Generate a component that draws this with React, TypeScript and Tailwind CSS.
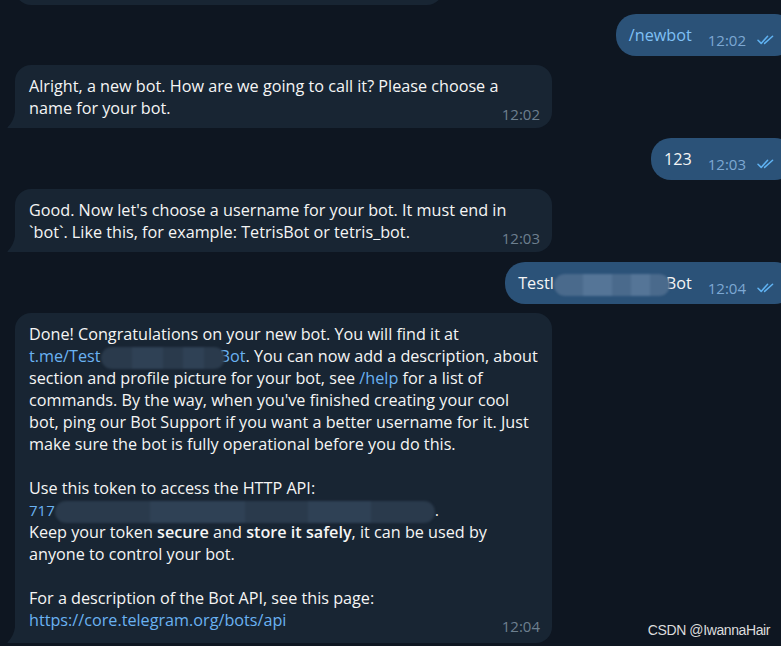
import * as React from "react"

const Checks = () => (
  <svg width="17" height="10" viewBox="0 0 17 10" fill="none" className="text-[#5fb2f2]">
    <path d="M1 5.2 L4.2 8.4 L10.6 1.2" stroke="currentColor" strokeWidth="1.5" strokeLinecap="round" strokeLinejoin="round" />
    <path d="M7.6 8.4 L15.6 1.2" stroke="currentColor" strokeWidth="1.5" strokeLinecap="round" />
  </svg>
)

const Tail = () => (
  <svg width="10" height="16" viewBox="0 0 10 16" className="absolute bottom-0 left-[-8px]">
    <path d="M10 0 L10 16 L1 16 Q0 16 0.6 15.2 Q7 9 8 0 Z" fill="#182533" />
  </svg>
)

function Blur({ w, tone = "dark" }: { w: number; tone?: "dark" | "light" }) {
  const base = tone === "dark" ? "bg-[#2a3a4c]" : "bg-[#4a6a8c]"
  const alt = tone === "dark" ? "bg-[#2f4155]" : "bg-[#557597]"
  return (
    <span className="relative inline-block h-[1em] align-middle" style={{ width: w }}>
      <span className={`absolute inset-x-0 -top-[3px] -bottom-[3px] flex overflow-hidden rounded-full blur-[1px] ${base}`}>
        <span className="w-1/4" />
        <span className={`w-1/4 ${alt}`} />
        <span className="w-1/6" />
        <span className={`w-1/6 ${alt}`} />
      </span>
    </span>
  )
}

function Incoming({ children, time, big }: { children: React.ReactNode; time: string; big?: boolean }) {
  return (
    <div
      className={`relative ml-[15px] w-[537px] rounded-[16px] rounded-bl-none bg-[#182533] px-[14px] pt-[10px] text-[16.2px] leading-[22px] text-[#f5f5f5] ${
        big ? "pb-[12px]" : "pb-[9px]"
      }`}
    >
      {children}
      <span
        className={`absolute right-[12px] text-[15px] leading-[18px] text-[#6d7f8f] ${
          big ? "bottom-[8px]" : "bottom-[5px]"
        }`}
      >
        {time}
      </span>
      <Tail />
    </div>
  )
}

function Outgoing({ children, time }: { children: React.ReactNode; time: string }) {
  return (
    <div className="flex justify-end -mr-[14px]">
      <div className="flex h-[42px] items-center rounded-[20px] bg-[#2b5278] pl-[13px] pr-[21px] text-[16.2px] leading-[22px] text-[#f5f5f5]">
        {children}
        <span className="ml-[16px] mt-[10px] text-[15px] leading-[18px] text-[#7da8d3]">{time}</span>
        <span className="ml-[11px] mt-[9px]">
          <Checks />
        </span>
      </div>
    </div>
  )
}

export default function App() {
  return (
    <div
      className="relative flex h-[646px] w-[781px] flex-col overflow-hidden bg-[#0e1621]"
      style={{ fontFamily: '"Open Sans", "Noto Sans", sans-serif' }}
    >
      <div className="-mt-[40px] ml-[15px] h-[45px] w-[428px] rounded-[16px] bg-[#182533]" />

      <div className="mt-[9px]">
        <Outgoing time="12:02">
          <span className="text-[#7fc0f5]">/newbot</span>
        </Outgoing>
      </div>

      <div className="mt-[9px]">
        <Incoming time="12:02">
          <div className="whitespace-nowrap">Alright, a new bot. How are we going to call it? Please choose a</div>
          <div className="whitespace-nowrap">name for your bot.</div>
        </Incoming>
      </div>

      <div className="mt-[10px]">
        <Outgoing time="12:03">
          <span>123</span>
        </Outgoing>
      </div>

      <div className="mt-[9px]">
        <Incoming time="12:03">
          <div className="whitespace-nowrap">Good. Now let's choose a username for your bot. It must end in</div>
          <div className="whitespace-nowrap">`bot`. Like this, for example: TetrisBot or tetris_bot.</div>
        </Incoming>
      </div>

      <div className="mt-[10px]">
        <Outgoing time="12:04">
          <span className="whitespace-nowrap">
            Testl<Blur w={116} tone="light" />
            <span className="-ml-[4px]">Bot</span>
          </span>
        </Outgoing>
      </div>

      <div className="mt-[9px]">
        <Incoming time="12:04" big>
          <div className="whitespace-nowrap">Done! Congratulations on your new bot. You will find it at</div>
          <div className="whitespace-nowrap">
            <span className="text-[#6ab2f2]">
              t.me/Test<Blur w={124} />
              <span className="-ml-[5px]">Bot</span>
            </span>
            . You can now add a description, about
          </div>
          <div className="whitespace-nowrap">
            section and profile picture for your bot, see <span className="text-[#6ab2f2]">/help</span> for a list of
          </div>
          <div className="whitespace-nowrap">commands. By the way, when you've finished creating your cool</div>
          <div className="whitespace-nowrap">bot, ping our Bot Support if you want a better username for it. Just</div>
          <div className="whitespace-nowrap">make sure the bot is fully operational before you do this.</div>
          <div className="h-[22px]" />
          <div className="whitespace-nowrap">Use this token to access the HTTP API:</div>
          <div className="whitespace-nowrap">
            <span className="text-[15px] text-[#6ab2f2]">717</span>
            <Blur w={380} />
            <span>.</span>
          </div>
          <div className="whitespace-nowrap">
            Keep your token <span className="font-semibold">secure</span> and{" "}
            <span className="font-semibold">store it safely</span>, it can be used by
          </div>
          <div className="whitespace-nowrap">anyone to control your bot.</div>
          <div className="h-[22px]" />
          <div className="whitespace-nowrap">For a description of the Bot API, see this page:</div>
          <div className="whitespace-nowrap text-[#6ab2f2]">https://core.telegram.org/bots/api</div>
        </Incoming>
      </div>

      <div
        className="absolute bottom-[5px] right-[11px] text-[14px] tracking-[-0.4px] text-[#dcdcdc]"
        style={{ fontFamily: '"Liberation Sans", Arial, sans-serif' }}
      >
        CSDN @IwannaHair
      </div>
    </div>
  )
}
